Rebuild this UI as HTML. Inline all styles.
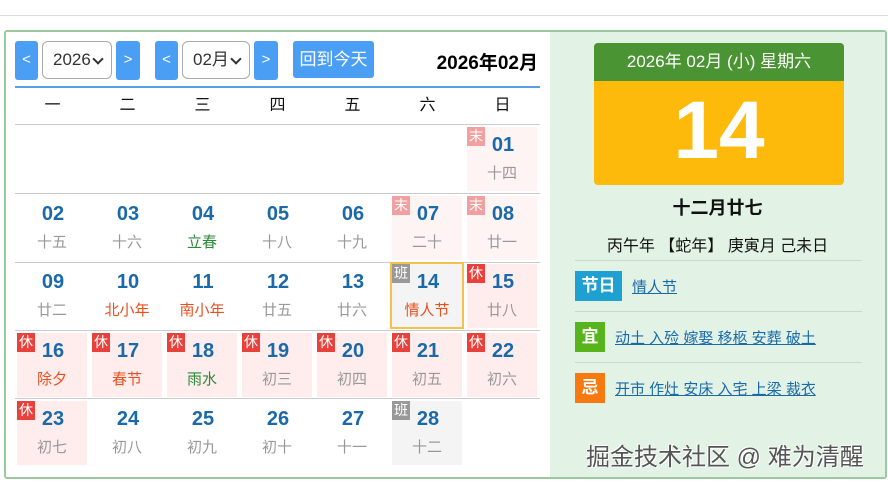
<!DOCTYPE html>
<html><head><meta charset="utf-8"><style>
*{margin:0;padding:0;box-sizing:border-box}
body{width:888px;height:483px;background:#fff;font-family:"Liberation Sans","Noto Sans CJK SC",sans-serif;position:relative;overflow:hidden}
.a{position:absolute}
.topline{left:0;top:15px;width:888px;height:1px;background:#ddd}
.box{left:4px;top:30px;width:883px;height:449px;border:2px solid #9cc89f;border-radius:3px}
.right{left:550px;top:32px;width:335px;height:445px;background:#e2f3e6}
.btn{background:#4a9ff5;color:#fff;border-radius:3px;text-align:center;font-size:15px;line-height:38px;height:39px;top:41px}
.sel{top:41px;height:38px;border:1px solid #aaa;border-radius:6px;background:#fff;font-size:17px;color:#333;line-height:36px;padding-left:10px}
.sel:after{content:"";position:absolute;right:9px;top:13px;width:6px;height:6px;border-right:2px solid #333;border-bottom:2px solid #333;transform:rotate(45deg)}
.wk{top:88px;width:75px;text-align:center;font-size:16px;line-height:36px;color:#111}
.hl{left:15px;width:525px;height:1px;background:#ccc}
.c{width:70px;height:64px}
.pk{background:#ffecec}.lp{background:#fff4f4}.gr{background:#f4f4f4}
.n{position:absolute;left:0;right:0;top:7px;text-align:center;font-weight:bold;font-size:20px;color:#1a6aaa;padding-left:2px}
.l{position:absolute;left:0;right:0;top:35px;text-align:center;font-size:15px;color:#999}
.b{position:absolute;left:0;top:0;width:18px;height:19px;font-size:14px;line-height:19px;text-align:center;color:#fff}
.x{background:#e8403a}.m{background:#f0a0a0}.g{background:#999}
.r{color:#e8501e}.gn{color:#2a8a3a}
.lnk{color:#1a6aaa;text-decoration:underline;font-size:15px}
.tag{color:#fff;font-weight:bold;font-size:17px;text-align:center;line-height:30px;height:30px}
.sep{left:575px;width:287px;height:1px;background:#c6dccb}
</style></head><body>
<div class="a topline"></div>
<div class="a box"></div>
<div class="a right"></div>

<div class="a btn" style="left:15px;width:23px">&lt;</div>
<div class="a sel" style="left:42px;width:70px">2026</div>
<div class="a btn" style="left:116px;width:24px">&gt;</div>
<div class="a btn" style="left:155px;width:23px">&lt;</div>
<div class="a sel" style="left:182px;width:68px">02月</div>
<div class="a btn" style="left:254px;width:24px">&gt;</div>
<div class="a btn" style="left:293px;width:81px;height:37px;line-height:37px;font-size:17px">回到今天</div>
<div class="a" style="right:350px;top:48px;font-weight:bold;font-size:19px;color:#000">2026年02月</div>
<div class="a" style="left:15px;top:86px;width:525px;height:2px;background:#5aa0e6"></div>

<div class="a wk" style="left:15px">一</div><div class="a wk" style="left:90px">二</div><div class="a wk" style="left:165px">三</div><div class="a wk" style="left:240px">四</div><div class="a wk" style="left:315px">五</div><div class="a wk" style="left:390px">六</div><div class="a wk" style="left:465px">日</div>
<div class="a hl" style="top:124px"></div><div class="a hl" style="top:193px"></div><div class="a hl" style="top:262px"></div><div class="a hl" style="top:330px"></div><div class="a hl" style="top:398px"></div>

<div class="a c lp" style="left:467px;top:127px"><div class="b m">末</div><div class="n">01</div><div class="l">十四</div></div>
<div class="a c" style="left:17px;top:196px"><div class="n">02</div><div class="l">十五</div></div>
<div class="a c" style="left:92px;top:196px"><div class="n">03</div><div class="l">十六</div></div>
<div class="a c" style="left:167px;top:196px"><div class="n">04</div><div class="l gn">立春</div></div>
<div class="a c" style="left:242px;top:196px"><div class="n">05</div><div class="l">十八</div></div>
<div class="a c" style="left:317px;top:196px"><div class="n">06</div><div class="l">十九</div></div>
<div class="a c lp" style="left:392px;top:196px"><div class="b m">末</div><div class="n">07</div><div class="l">二十</div></div>
<div class="a c lp" style="left:467px;top:196px"><div class="b m">末</div><div class="n">08</div><div class="l">廿一</div></div>
<div class="a c" style="left:17px;top:264px"><div class="n">09</div><div class="l">廿二</div></div>
<div class="a c" style="left:92px;top:264px"><div class="n">10</div><div class="l r">北小年</div></div>
<div class="a c" style="left:167px;top:264px"><div class="n">11</div><div class="l r">南小年</div></div>
<div class="a c" style="left:242px;top:264px"><div class="n">12</div><div class="l">廿五</div></div>
<div class="a c" style="left:317px;top:264px"><div class="n">13</div><div class="l">廿六</div></div>
<div class="a c gr" style="left:390px;top:262px;width:74px;height:67px;border:2px solid #f3c24a"><div class="b g">班</div><div class="n">14</div><div class="l r">情人节</div></div>
<div class="a c pk" style="left:467px;top:264px"><div class="b x">休</div><div class="n">15</div><div class="l">廿八</div></div>
<div class="a c pk" style="left:17px;top:333px"><div class="b x">休</div><div class="n">16</div><div class="l r">除夕</div></div>
<div class="a c pk" style="left:92px;top:333px"><div class="b x">休</div><div class="n">17</div><div class="l r">春节</div></div>
<div class="a c pk" style="left:167px;top:333px"><div class="b x">休</div><div class="n">18</div><div class="l gn">雨水</div></div>
<div class="a c pk" style="left:242px;top:333px"><div class="b x">休</div><div class="n">19</div><div class="l">初三</div></div>
<div class="a c pk" style="left:317px;top:333px"><div class="b x">休</div><div class="n">20</div><div class="l">初四</div></div>
<div class="a c pk" style="left:392px;top:333px"><div class="b x">休</div><div class="n">21</div><div class="l">初五</div></div>
<div class="a c pk" style="left:467px;top:333px"><div class="b x">休</div><div class="n">22</div><div class="l">初六</div></div>
<div class="a c pk" style="left:17px;top:401px"><div class="b x">休</div><div class="n">23</div><div class="l">初七</div></div>
<div class="a c" style="left:92px;top:401px"><div class="n">24</div><div class="l">初八</div></div>
<div class="a c" style="left:167px;top:401px"><div class="n">25</div><div class="l">初九</div></div>
<div class="a c" style="left:242px;top:401px"><div class="n">26</div><div class="l">初十</div></div>
<div class="a c" style="left:317px;top:401px"><div class="n">27</div><div class="l">十一</div></div>
<div class="a c gr" style="left:392px;top:401px"><div class="b g">班</div><div class="n">28</div><div class="l">十二</div></div>

<div class="a" style="left:594px;top:43px;width:250px;height:142px;border-radius:4px;overflow:hidden;background:#fdba0b">
<div style="height:38px;background:#4a9434;color:#fff;text-align:center;font-size:17px;line-height:38px">2026年 02月 (小) 星期六</div>
<div style="text-align:center;color:#fff;font-weight:bold;font-size:82px;line-height:100px">14</div>
</div>
<div class="a" style="left:550px;width:335px;top:194px;text-align:center;font-weight:bold;font-size:18px;color:#111">十二月廿七</div>
<div class="a" style="left:550px;width:335px;top:232px;text-align:center;font-size:16px;color:#111">丙午年 【蛇年】 庚寅月 己未日</div>
<div class="a sep" style="top:260px"></div><div class="a sep" style="top:311px"></div><div class="a sep" style="top:362px"></div>
<div class="a tag" style="left:575px;top:271px;width:47px;background:#1ea0d2">节日</div>
<div class="a lnk" style="left:632px;top:276px">情人节</div>
<div class="a tag" style="left:575px;top:322px;width:30px;background:#58b41c">宜</div>
<div class="a lnk" style="left:615px;top:327px">动土 入殓 嫁娶 移柩 安葬 破土</div>
<div class="a tag" style="left:575px;top:373px;width:30px;background:#f77a10">忌</div>
<div class="a lnk" style="left:615px;top:378px">开市 作灶 安床 入宅 上梁 裁衣</div>
<div class="a" style="left:586px;top:437px;font-size:24px;color:#555;text-shadow:1px 1px 0 #fff,-1px -1px 0 #fff">掘金技术社区 @ 难为清醒</div>
</body></html>
